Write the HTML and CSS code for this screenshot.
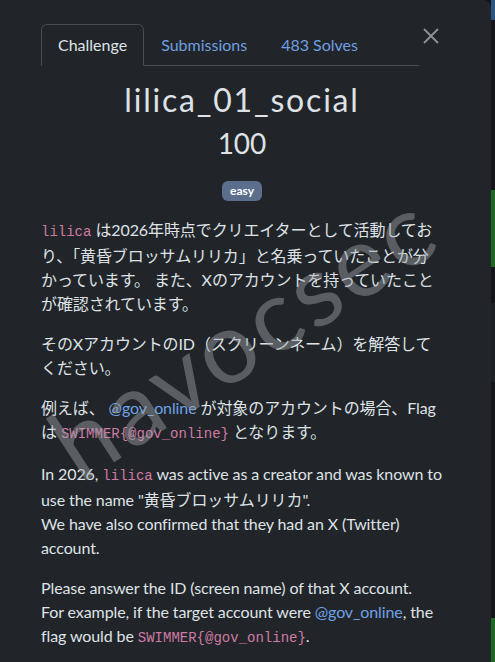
FILE: index.html
```html
<!DOCTYPE html>
<html lang="ja">
<head>
  <meta charset="UTF-8">
  <meta name="viewport" content="width=device-width, initial-scale=1.0">
  <title>lilica_01_social</title>
  <link rel="stylesheet" href="styles.css">
</head>
<body>
  <div id="modal">
    <div id="top">
      <ul id="tabs">
        <li class="tab active">Challenge</li>
        <li class="tab">Submissions</li>
        <li class="tab">483 Solves</li>
      </ul>
      <button id="close" aria-label="Close">
        <svg width="16" height="16" viewBox="0 0 16 16">
          <path d="M1 1L15 15M15 1L1 15" stroke="#8d9297" stroke-width="1.8" fill="none"/>
        </svg>
      </button>
    </div>
    <div id="content">
      <h2 class="name">lilica_01_social</h2>
      <h3 class="value">100</h3>
      <div class="tags"><span class="badge">easy</span></div>
      <div class="desc">
        <p><code>lilica</code> は2026年時点でクリエイターとして活動しており、「黄昏ブロッサムリリカ」と名乗っていたことが分かっています。 また、Xのアカウントを持っていたことが確認されています。</p>
        <p>そのXアカウントのID（スクリーンネーム）を解答してください。</p>
        <p>例えば、 <a href="#">@gov_online</a> が対象のアカウントの場合、Flag は <code>SWIMMER{@gov_online}</code> となります。</p>
        <p>In 2026, <code>lilica</code> was active as a creator and was known to use the name "黄昏ブロッサムリリカ".<br>We have also confirmed that they had an X (Twitter) account.</p>
        <p>Please answer the ID (screen name) of that X account.<br>For example, if the target account were <a href="#">@gov_online</a>, the flag would be <code>SWIMMER{@gov_online}</code>.</p>
      </div>
    </div>
    <div id="mark">havocsec</div>
  </div>
  <div id="behind">
    <div class="b-blue"></div>
    <div class="b-dark h1"></div>
    <div class="b-green h2"></div>
    <div class="b-dark h3"></div>
    <div class="b-gray h4"></div>
    <div class="b-dark h5"></div>
    <div class="b-green h6"></div>
  </div>
</body>
</html>
```
FILE: styles.css
```css
body{
  margin: 0;
  height: 662px;
  overflow: hidden;
  display: flex;
  background-color: #131518;
  font-family: Lato, "Noto Sans CJK JP", sans-serif;
  color: #dee2e6;
}
#modal{
  width: 491px;
  height: 662px;
  flex: none;
  box-sizing: border-box;
  padding: 24px 0 0 41px;
  background-color: #212529;
  border-top-right-radius: 8px;
  position: relative;
  overflow: hidden;
}
#top{
  display: flex;
  align-items: flex-start;
}
#tabs{
  width: 378px;
  display: flex;
  margin: 0;
  padding: 0;
  list-style-type: none;
  border-bottom: 1px solid #464c52;
}
.tab{
  padding: 8px 16px;
  margin-bottom: -1px;
  font-size: 16px;
  line-height: 24px;
  color: #6f9fe0;
  border: 1px solid transparent;
  border-radius: 6px 6px 0 0;
}
.tab.active{
  color: #dee2e6;
  background-color: #212529;
  border-color: #464c52 #464c52 #212529;
}
#close{
  margin: 4px 0 0 4px;
  padding: 0;
  width: 16px;
  height: 16px;
  border: none;
  background: none;
  display: flex;
}
/* 문제 내용 */
#content{
  width: 402px;
}
.name{
  margin: 15px 0 8px;
  font-size: 32px;
  font-weight: normal;
  line-height: 1.2;
  letter-spacing: 1.8px;
  text-align: center;
}
.value{
  margin: 0;
  font-size: 28px;
  font-weight: normal;
  line-height: 1.2;
  text-align: center;
}
.tags{
  display: flex;
  justify-content: center;
  margin-top: 20px;
}
.badge{
  padding: 4px 8px;
  font-size: 12px;
  font-weight: bold;
  line-height: 12px;
  color: #fff;
  background-color: #5b6e8c;
  border-radius: 6px;
}
.desc{
  margin-top: 17px;
}
p{
  margin: 0 0 16px;
  font-size: 16px;
  line-height: 24px;
  letter-spacing: -0.1px;
}
code{
  font-family: "Liberation Mono", monospace;
  font-size: 14px;
  letter-spacing: 0;
  color: #cf7aa3;
}
a{
  color: #6ea2e8;
  text-decoration: none;
}
/* 워터마크 */
#mark{
  position: absolute;
  left: 24px;
  top: 273px;
  font-size: 100px;
  line-height: 1.2;
  letter-spacing: 4px;
  color: rgba(160, 164, 168, 0.45);
  transform: rotate(-33deg);
  white-space: nowrap;
  pointer-events: none;
}
/* 뒤쪽 페이지 */
#behind{
  flex: 1;
  display: flex;
  flex-direction: column;
}
.b-blue{
  height: 20px;
  background-color: #2b5482;
}
.b-dark{
  background-color: #131518;
}
.b-green{
  background-color: #1e6a25;
}
.b-gray{
  background-color: #1d2024;
}
.h1{ height: 170px; }
.h2{ height: 77px; }
.h3{ height: 36px; }
.h4{ height: 79px; }
.h5{ height: 236px; }
.h6{ height: 44px; }
```
